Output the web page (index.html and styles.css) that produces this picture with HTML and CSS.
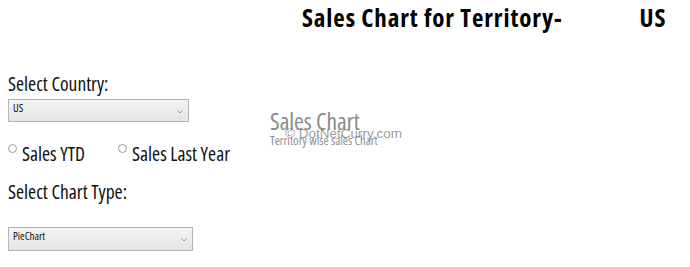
FILE: index.html
```html
<!DOCTYPE html>
<html>
<head>
<meta charset="utf-8">
<link rel="stylesheet" href="styles.css">
</head>
<body>
<header class="header">
  <h1 class="title">Sales Chart for Territory-</h1>
  <h1 class="title">US</h1>
</header>
<main class="main">
  <section class="form">
    <div class="label label-country">Select Country:</div>
    <div class="select select-country">
      <span class="select-text">US</span>
      <svg class="chev" width="6" height="4" viewBox="0 0 6 4"><path d="M0.5 0.5 L3 3 L5.5 0.5" fill="none" stroke="#8a8a8a" stroke-width="0.9"/></svg>
    </div>
    <div class="radios">
      <label class="radio"><span class="dot"></span><span class="radio-text">Sales YTD</span></label>
      <label class="radio"><span class="dot"></span><span class="radio-text">Sales Last Year</span></label>
    </div>
    <div class="label label-type">Select Chart Type:</div>
    <div class="select select-type">
      <span class="select-text">PieChart</span>
      <svg class="chev" width="6" height="4" viewBox="0 0 6 4"><path d="M0.5 0.5 L3 3 L5.5 0.5" fill="none" stroke="#8a8a8a" stroke-width="0.9"/></svg>
    </div>
  </section>
  <section class="chart">
    <div class="chart-title">Sales Chart</div>
    <div class="chart-sub">Territory wise sales Chart</div>
    <div class="watermark">© DotNetCurry.com</div>
  </section>
</main>
</body>
</html>
```
FILE: styles.css
```css
body {
  margin: 0;
  background: #fff;
  color: #111;
  font-family: "Open Sans", "Noto Sans", sans-serif;
  font-stretch: 87.5%;
}
.header {
  display: flex;
  gap: 77px;
  padding: 2px 0 0 302px;
  white-space: nowrap;
}
.title {
  margin: 0;
  font-size: 25px;
  line-height: 30px;
  letter-spacing: 0.9px;
  font-weight: 700;
  color: #000;
}
.main {
  display: flex;
  padding: 0 0 0 8px;
  margin-top: 42px;
}
.form {
  display: flex;
  flex-direction: column;
  width: 262px;
  flex-shrink: 0;
}
.label {
  font-size: 19.5px;
  line-height: 20px;
  white-space: nowrap;
}
.select {
  box-sizing: border-box;
  display: flex;
  align-items: center;
  justify-content: space-between;
  border: 1px solid #b5b5b5;
  background: linear-gradient(#f2f2f2, #e6e6e6);
  padding: 0 5px 0 4px;
}
.select-country {
  width: 181px;
  height: 23px;
  margin-top: 5px;
}
.select-type {
  width: 185px;
  height: 24px;
  margin-top: 25px;
}
.select-text {
  font-size: 11px;
  line-height: 12px;
  color: #111;
  margin-top: -6px;
}
.chev {
  margin-top: 2px;
}
.radios {
  display: flex;
  gap: 33px;
  margin-top: 22px;
  white-space: nowrap;
}
.radio {
  display: flex;
  align-items: flex-start;
  gap: 5px;
}
.dot {
  box-sizing: border-box;
  width: 9px;
  height: 9px;
  border: 1px solid #9a9a9a;
  border-radius: 50%;
  background: #fff;
  margin-top: 0;
}
.radio-text {
  font-size: 19.5px;
  line-height: 20px;
}
.label-type {
  margin-top: 18px;
}
.chart {
  position: relative;
  margin-top: 36px;
  color: #8c8c8c;
  white-space: nowrap;
}
.chart-title {
  font-size: 23.5px;
  line-height: 22px;
  color: #8a8a8a;
}
.chart-sub {
  font-size: 12.5px;
  line-height: 12px;
  margin-top: 3px;
  color: #8f8f8f;
}
.watermark {
  position: absolute;
  left: 15px;
  top: 17px;
  font-family: "Liberation Sans", Arial, sans-serif;
  font-stretch: normal;
  font-size: 13.5px;
  line-height: 14px;
  color: rgba(120, 120, 120, 0.75);
}
```
